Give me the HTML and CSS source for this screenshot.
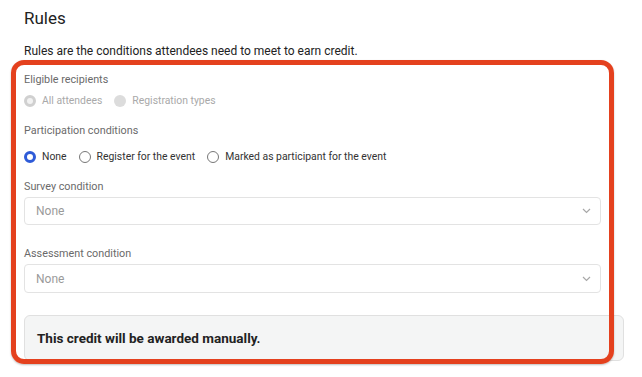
FILE: index.html
```html
<!DOCTYPE html>
<html lang="en">

<head>
    <meta charset="UTF-8">
    <meta name="viewport" content="width=device-width, initial-scale=1.0">
    <title>Rules</title>
    <link rel="stylesheet" href="styles.css">
</head>

<body>
    <div class="page">
        <h1 class="title">Rules</h1>
        <p class="intro">Rules are the conditions attendees need to meet to earn credit.</p>

        <div class="rules">
            <!-- 可领取对象 -->
            <div class="field field-first">
                <div class="label">Eligible recipients</div>
                <div class="radios disabled">
                    <label class="radio"><span class="dot checked"></span>All attendees</label>
                    <label class="radio"><span class="dot"></span>Registration types</label>
                </div>
            </div>

            <!-- 参与条件 -->
            <div class="field">
                <div class="label">Participation conditions</div>
                <div class="radios radios-open">
                    <label class="radio"><span class="dot checked"></span>None</label>
                    <label class="radio"><span class="dot"></span>Register for the event</label>
                    <label class="radio"><span class="dot"></span>Marked as participant for the event</label>
                </div>
            </div>

            <!-- 问卷条件 -->
            <div class="field">
                <div class="label">Survey condition</div>
                <div class="select">
                    <span>None</span>
                    <svg width="9" height="6" viewBox="0 0 9 6"><path d="M1 1l3.5 3.5L8 1" fill="none" stroke="#a8a8a8" stroke-width="1.2"/></svg>
                </div>
            </div>

            <!-- 考核条件 -->
            <div class="field field-wide">
                <div class="label">Assessment condition</div>
                <div class="select">
                    <span>None</span>
                    <svg width="9" height="6" viewBox="0 0 9 6"><path d="M1 1l3.5 3.5L8 1" fill="none" stroke="#a8a8a8" stroke-width="1.2"/></svg>
                </div>
            </div>

            <div class="notice">This credit will be awarded manually.</div>
        </div>

        <!-- 红色标注框 -->
        <div class="mark"></div>
    </div>
</body>

</html>
```

FILE: styles.css
```css
* {
    margin: 0;
    padding: 0;
    box-sizing: border-box;
}

body {
    background: #fff;
    font-family: Roboto, "Noto Sans", sans-serif;
    color: #2b2b2b;
    overflow: hidden;
}

.page {
    position: relative;
    width: 642px;
    height: 377px;
    padding: 6px 0 0 24px;
    overflow: hidden;
}

.title {
    font-size: 17px;
    font-weight: 400;
    line-height: 24px;
    color: #222;
}

.intro {
    margin-top: 12px;
    font-size: 12px;
    line-height: 18px;
    color: #222;
}

.rules {
    display: flex;
    flex-direction: column;
}

.field {
    margin-top: 14px;
}

.field-first {
    margin-top: 12px;
}

.field-wide {
    margin-top: 21px;
}

.label {
    font-size: 10.8px;
    line-height: 16px;
    color: #6a6a6a;
}

.radios {
    display: flex;
    gap: 12px;
    margin-top: 5px;
    height: 16px;
}

.radios-open {
    margin-top: 10px;
}

.radio {
    display: flex;
    align-items: center;
    gap: 6px;
    font-size: 10.4px;
    line-height: 16px;
    color: #333;
}

.dot {
    width: 12px;
    height: 12px;
    border-radius: 50%;
    border: 1px solid #777;
    background: #fff;
}

.dot.checked {
    border: 3.5px solid #2e5bd8;
}

.radios.disabled .radio {
    color: #a9a9a9;
}

.radios.disabled .dot {
    border: none;
    background: #dcdcdc;
}

.radios.disabled .dot.checked {
    border: 3.5px solid #d0d0d0;
    background: #f2f2f2;
}

.select {
    display: flex;
    align-items: center;
    justify-content: space-between;
    width: 577px;
    height: 28px;
    margin-top: 2px;
    padding: 0 9px 0 11px;
    border: 1px solid #e3e3e3;
    border-radius: 4px;
    font-size: 12px;
    color: #9a9a9a;
}

.field-wide .select {
    height: 29px;
}

.notice {
    width: 600px;
    height: 46px;
    margin-top: 22px;
    padding-left: 12px;
    display: flex;
    align-items: center;
    background: #f4f5f5;
    border: 1px solid #e0e0e0;
    border-radius: 6px;
    font-size: 13.5px;
    font-weight: 700;
    color: #222;
}

.mark {
    position: absolute;
    left: 11px;
    top: 60px;
    width: 603px;
    height: 304px;
    border: 5px solid #e4411e;
    border-radius: 13px;
    box-shadow: 0 1px 2px rgba(0, 0, 0, 0.25);
}
```
